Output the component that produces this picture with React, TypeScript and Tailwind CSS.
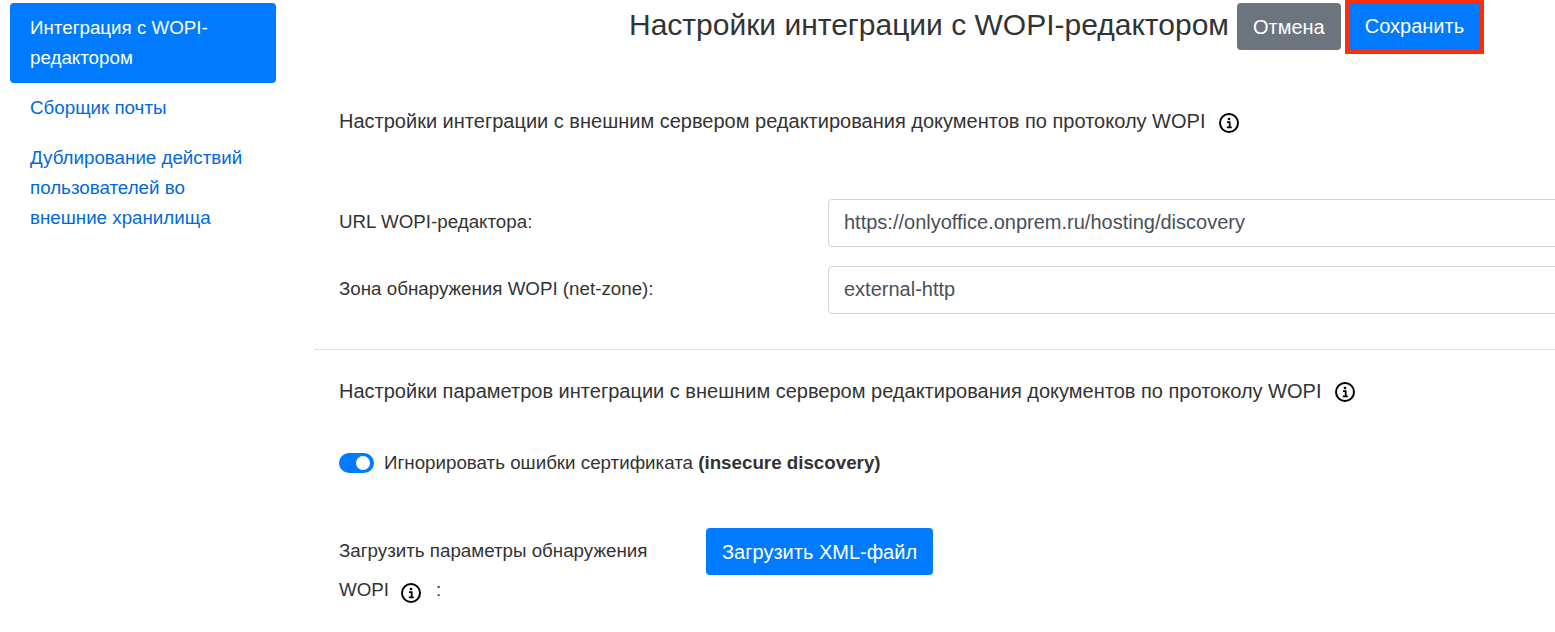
function InfoIcon() {
  return (
    <svg width="20" height="20" viewBox="0 0 20 20" fill="none" className="shrink-0">
      <circle cx="10" cy="10" r="9" stroke="#000" strokeWidth="2" />
      <circle cx="10" cy="6" r="1.3" fill="#000" />
      <path d="M8 9.2h2.7v5M7.8 14.4h5" stroke="#000" strokeWidth="1.8" />
    </svg>
  );
}

function Field({ label, value }: { label: string; value: string }) {
  return (
    <div className="flex items-center">
      <label className="w-[489px] shrink-0 pb-[2px]">{label}</label>
      <input
        readOnly
        value={value}
        className="h-[48px] w-[760px] shrink-0 rounded-l-[4px] border border-[#ced4da] px-[15px] pb-[2px] text-[20px] text-[#495057] outline-none"
      />
    </div>
  );
}

export default function App() {
  const menu = ["Сборщик почты", "Дублирование действий пользователей во внешние хранилища"];

  return (
    <div className="flex h-[632px] w-[1555px] overflow-hidden bg-white font-['Liberation_Sans',Arial,sans-serif] text-[18.75px] leading-[30px] text-[#333]">
      <div className="w-[314px] shrink-0 pl-[10px] pt-[3px]">
        <div className="w-[266px]">
          <a className="block rounded-[4px] bg-[#007bff] px-[20px] py-[10px] text-white">
            Интеграция с WOPI-редактором
          </a>
          {menu.map((item) => (
            <a key={item} className="block px-[20px] py-[10px] text-[#0069e0]">
              {item}
            </a>
          ))}
        </div>
      </div>

      <div className="min-w-0 flex-1">
        <div className="flex h-[54px] items-start">
          <h1 className="ml-[315px] mt-[5px] whitespace-nowrap text-[30px] leading-[40px]">
            Настройки интеграции с WOPI-редактором
          </h1>
          <button className="ml-[8px] mt-[3px] h-[47px] rounded-[4px] bg-[#6c757d] px-[16px] text-[20px] text-white">Отмена</button>
          <button className="ml-[4px] box-content h-[50px] border-x-[4px] border-b-[4px] border-[#ff2d08] bg-[#ff2d08]">
            <span className="mt-[3px] block h-[47px] rounded-[4px] bg-[#007bff] px-[16px] text-[20px] leading-[47px] text-white">Сохранить</span>
          </button>
        </div>

        <div className="px-[25px] pt-[52px]">
          <div className="flex items-center">
            <span className="text-[20px]">Настройки интеграции с внешним сервером редактирования документов по протоколу WOPI</span>
            <span className="ml-[14px] mt-[4px]">
              <InfoIcon />
            </span>
          </div>
          <div className="mt-[63px] flex flex-col gap-[19px]">
            <Field label="URL WOPI-редактора:" value="https://onlyoffice.onprem.ru/hosting/discovery" />
            <Field label="Зона обнаружения WOPI (net-zone):" value="external-http" />
          </div>
        </div>

        <hr className="mt-[35px] border-[#dee2e6]" />

        <div className="px-[25px] pt-[26px]">
          <div className="flex items-center">
            <span className="text-[20px]">Настройки параметров интеграции с внешним сервером редактирования документов по протоколу WOPI</span>
            <span className="ml-[14px] mt-[2px]">
              <InfoIcon />
            </span>
          </div>

          <div className="mt-[42px] flex items-center">
            <button className="flex h-[20px] w-[35px] items-center justify-end rounded-full bg-[#007bff] pr-[4px]">
              <span className="block h-[14px] w-[14px] rounded-full bg-white" />
            </button>
            <span className="ml-[10px]">
              Игнорировать ошибки сертификата <b className="font-bold">(insecure discovery)</b>
            </span>
          </div>

          <div className="mt-[50px] flex items-start">
            <div className="w-[367px] shrink-0 pt-[3px] leading-[39px]">
              <div className="w-[320px]">Загрузить параметры обнаружения</div>
              <div className="flex items-center">
                WOPI
                <span className="ml-[12px] mt-[6px]">
                  <InfoIcon />
                </span>
                <span className="ml-[15px]">:</span>
              </div>
            </div>
            <button className="h-[47px] rounded-[4px] bg-[#007bff] px-[16px] text-[20px] text-white">Загрузить XML-файл</button>
          </div>
        </div>
      </div>
    </div>
  );
}
